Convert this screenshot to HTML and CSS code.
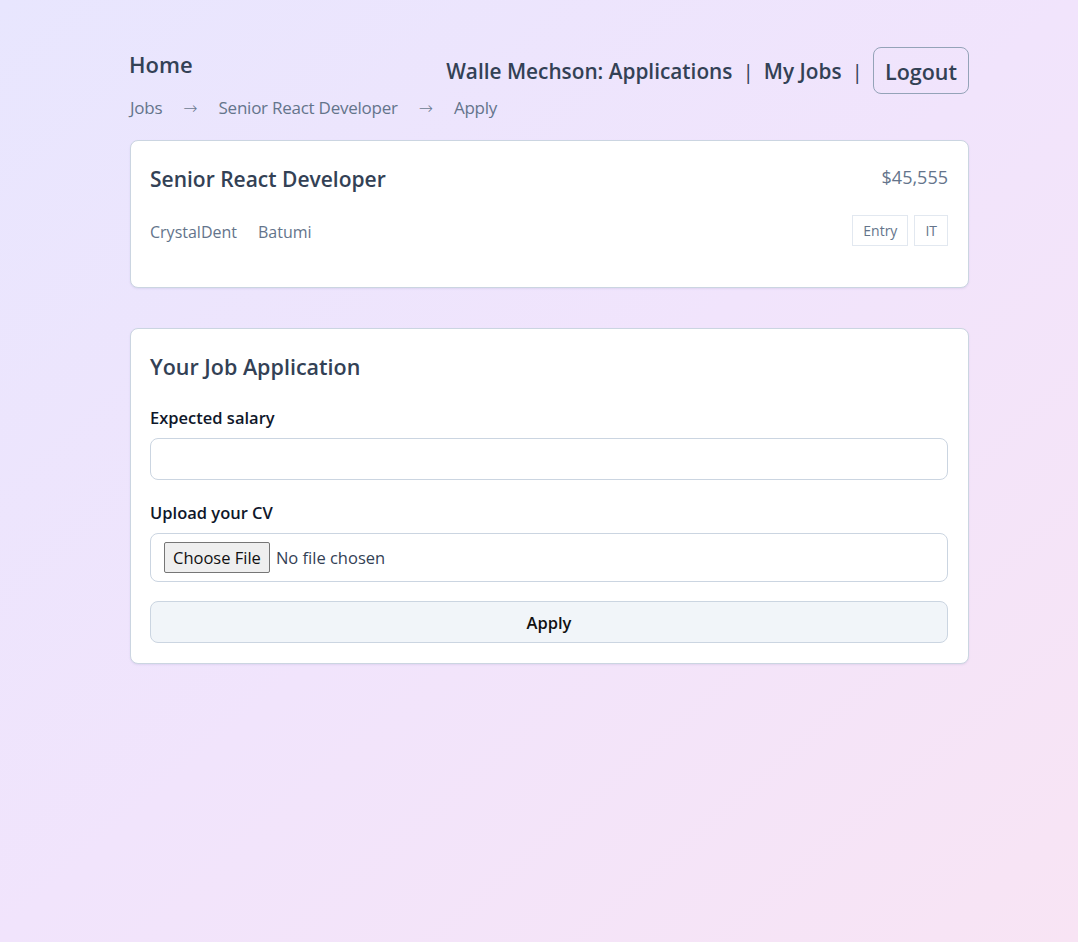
FILE: index.html
```html
<!DOCTYPE html>
<html lang="en">
<head>
<meta charset="utf-8">
<title>Apply - Senior React Developer</title>
<link rel="stylesheet" href="styles.css">
</head>
<body>
<div class="page">
  <header class="topbar">
    <div class="home">Home</div>
    <nav class="nav">
      <span class="nav-link">Walle Mechson: Applications</span>
      <span class="sep">|</span>
      <span class="nav-link">My Jobs</span>
      <span class="sep">|</span>
      <button class="logout">Logout</button>
    </nav>
  </header>
  <ul class="crumbs">
    <li>Jobs</li>
    <li class="arrow">→</li>
    <li>Senior React Developer</li>
    <li class="arrow">→</li>
    <li>Apply</li>
  </ul>

  <section class="card job">
    <div class="job-head">
      <h2 class="card-title">Senior React Developer</h2>
      <div class="salary">$45,555</div>
    </div>
    <div class="job-meta">
      <div class="meta-left">
        <span>CrystalDent</span>
        <span>Batumi</span>
      </div>
      <div class="tags">
        <span class="tag">Entry</span>
        <span class="tag">IT</span>
      </div>
    </div>
  </section>

  <section class="card apply-card">
    <h2 class="card-title">Your Job Application</h2>
    <form class="form">
      <label class="label" for="salary">Expected salary</label>
      <input class="field" id="salary" type="number">
      <label class="label label-cv" for="cv">Upload your CV</label>
      <input class="field file" id="cv" type="file">
      <button type="button" class="apply-btn">Apply</button>
    </form>
  </section>
</div>
</body>
</html>
```

FILE: styles.css
```css
* { box-sizing: border-box; }
html, body { margin: 0; height: 100%; }
body {
  font-family: "Open Sans", "Noto Sans", sans-serif;
  color: #334155;
  background: linear-gradient(to bottom right, #e8e6fe 0%, #f1e4fc 50%, #f8e4f4 100%);
  min-height: 942px;
}
.page {
  width: 839px;
  margin-left: 130px;
  padding-top: 47px;
}
.topbar {
  display: flex;
  justify-content: space-between;
  align-items: flex-start;
}
.home {
  font-size: 22px;
  font-weight: 600;
  line-height: 32px;
  margin-top: 1px;
  margin-left: -1px;
  color: #334155;
}
.nav {
  display: flex;
  align-items: center;
  gap: 10px;
  font-size: 20.8px;
  font-weight: 600;
  color: #334155;
}
.sep { font-weight: 400; }
.logout {
  font-family: inherit;
  font-size: 21.5px;
  font-weight: 600;
  color: #334155;
  background: transparent;
  border: 1px solid #94a3b8;
  border-radius: 8px;
  height: 47px;
  padding: 2px 11px 0;
}
.crumbs {
  list-style: none;
  margin: 0;
  padding: 0;
  display: flex;
  align-items: center;
  gap: 21px;
  font-size: 17px;
  letter-spacing: -0.25px;
  line-height: 28px;
  color: #64748b;
}
.arrow {
  font-family: "DejaVu Sans", sans-serif;
  font-size: 17px;
  font-weight: 200;
  letter-spacing: 0;
  color: #6b7a90;
}
.card {
  background: #fff;
  border: 1px solid #cbd5e1;
  border-radius: 8px;
  box-shadow: 0 1px 2px rgba(100, 100, 160, 0.12);
  padding: 20px 20px 20px 19px;
}
.job {
  margin-top: 18px;
  height: 148px;
}
.job-head {
  display: flex;
  justify-content: space-between;
  align-items: flex-start;
}
.card-title {
  margin: 0;
  font-size: 21px;
  font-weight: 600;
  line-height: 36px;
  color: #334155;
}
.apply-card .card-title { font-size: 21.5px; }
.salary {
  font-size: 18px;
  line-height: 32px;
  color: #64748b;
}
.job-meta {
  display: flex;
  justify-content: space-between;
  align-items: center;
  margin-top: 18px;
}
.meta-left {
  display: flex;
  gap: 21px;
  font-size: 16px;
  line-height: 26px;
  padding-top: 2px;
  color: #64748b;
}
.tags { display: flex; gap: 6px; }
.tag {
  border: 1px solid #e2e8f0;
  padding: 0 10px;
  height: 31px;
  line-height: 29px;
  font-size: 14px;
  color: #64748b;
}
.apply-card { margin-top: 40px; }
.form { display: flex; flex-direction: column; }
.label {
  margin-top: 21px;
  font-size: 16.5px;
  font-weight: 600;
  line-height: 24px;
  color: #0f172a;
}
.label-cv { margin-top: 21px; }
.field {
  margin-top: 8px;
  width: 100%;
  height: 42px;
  border: 1px solid #cbd5e1;
  border-radius: 8px;
  background: #fff;
  font-family: inherit;
  font-size: 16px;
  padding: 0 12px;
}
.file {
  height: 49px;
  padding: 8px 13px;
  color: #334155;
  font-size: 16.5px;
}
.file::file-selector-button {
  font-family: inherit;
  font-size: 16.5px;
  color: #111;
  background: #efefef;
  border: 1px solid #767676;
  border-radius: 2px;
  padding: 1px 8px;
  margin-right: 6px;
  height: 31px;
}
.apply-btn {
  margin-top: 19px;
  height: 42px;
  width: 100%;
  background: #f1f5f9;
  border: 1px solid #cbd5e1;
  border-radius: 8px;
  font-family: inherit;
  font-size: 16.5px;
  font-weight: 600;
  color: #111;
}
```
